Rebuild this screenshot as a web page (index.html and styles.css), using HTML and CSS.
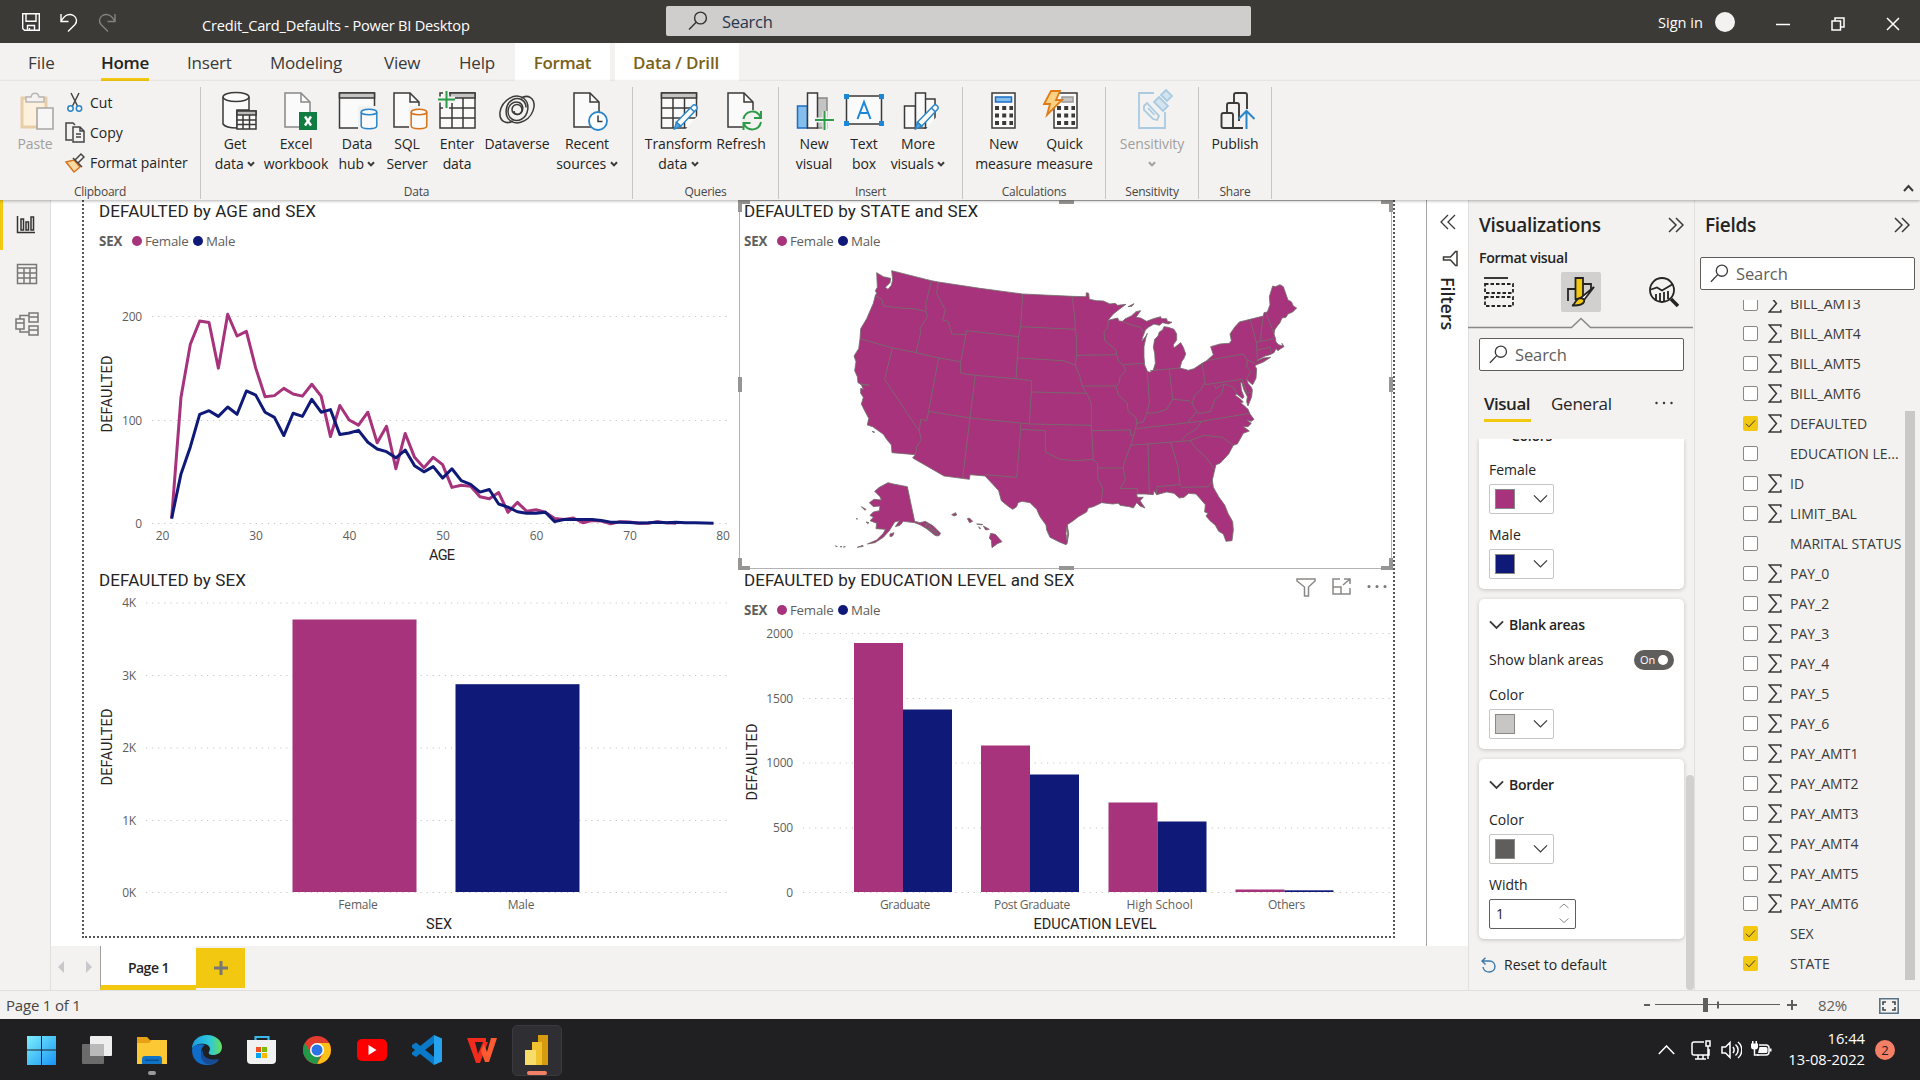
FILE: index.html
```html
<!DOCTYPE html>
<html lang="en">
<head>
<meta charset="utf-8">
<title>Credit_Card_Defaults - Power BI Desktop</title>
<link rel="stylesheet" href="styles.css">
</head>
<body>
<svg class="defs" aria-hidden="true">
  <symbol id="i-search" viewBox="0 0 20 20"><circle cx="12.5" cy="7" r="5.9"/><path d="M8.2 11.2L1 18.6"/></symbol>
  <symbol id="i-caret" viewBox="0 0 8 6"><path d="M1 1.2L4 4.4L7 1.2"/></symbol>
  <symbol id="i-chev" viewBox="0 0 16 10"><path d="M1 1.2L8 8.2L15 1.2"/></symbol>
  <symbol id="i-dbl" viewBox="0 0 16 16"><path d="M1 1l7 7l-7 7M8 1l7 7l-7 7"/></symbol>
  <symbol id="i-sigma" viewBox="0 0 14 19"><path d="M12.8 3.2V1H1.2L8.4 9.5L1.2 18H12.8V15.8"/></symbol>
  <symbol id="i-check" viewBox="0 0 15 15"><path d="M3 7.8L6 10.8L12 4.4"/></symbol>
  <symbol id="i-doc" viewBox="0 0 28 36"><path class="paper" d="M1 1h16l9 9v25H1z"/><path d="M17 1v9h9"/></symbol>
  <symbol id="i-cyl" viewBox="0 0 18 22"><path class="paper" d="M1.2 4v14c0 3.6 15.6 3.6 15.6 0V4"/><ellipse class="paper" cx="9" cy="4" rx="7.8" ry="2.8"/></symbol>
  <symbol id="i-pencil" viewBox="0 0 26 28"><path class="paper" d="M3 20L20 2.6c2-2 6 1.6 4 4L7.5 24z"/><path class="nib" d="M3 20l4.500 4L1 27z"/><path d="M17.500 5.200l4.300 4"/></symbol>
</svg>

<header class="titlebar">
  <div class="quick">
    <svg width="18" height="18" viewBox="0 0 18 18"><path d="M.7.7h16.600v16.600H2.500L.7 15.500zM4 .7v7.500h10V.7M5.500 17v-4.500h7V17M7.500 15v2"/></svg>
    <svg width="18" height="20" viewBox="0 0 18 20"><path d="M1 1v7.500h7.500M1 8.500C5 1 10 .5 13.500 2.500c4 2.500 3.500 6.500 1.500 9L8 18.500"/></svg>
    <svg class="dim" width="18" height="20" viewBox="0 0 18 20"><path d="M17 1v7.500H9.500M17 8.500C13 1 8 .5 4.500 2.500c-4 2.500-3.500 6.500-1.500 9L10 18.500"/></svg>
  </div>
  <div class="doc-title">Credit_Card_Defaults - Power BI Desktop</div>
  <div class="top-search"><svg width="20" height="20"><use href="#i-search"/></svg><span>Search</span></div>
  <div class="signin"><span>Sign in</span><i></i></div>
  <div class="winbtns">
    <svg width="14" height="14" viewBox="0 0 14 14"><path d="M0 7.500h14"/></svg>
    <svg width="14" height="14" viewBox="0 0 14 14"><path d="M1 4h8.500v9H1zM4 4V1h9v9H9.500"/></svg>
    <svg width="14" height="14" viewBox="0 0 14 14"><path d="M1 1l12 12M13 1L1 13"/></svg>
  </div>
</header>

<nav class="tabs">
  <span class="t-file">File</span><span class="t-home">Home</span><span class="t-insert">Insert</span><span class="t-model">Modeling</span><span class="t-view">View</span><span class="t-help">Help</span><span class="ctx c1">Format</span><span class="ctx c2">Data / Drill</span>
</nav>

<section class="ribbon">
  <div class="group g-clip">
    <div class="items">
      <div class="item paste off">
        <svg class="ico" viewBox="0 0 38 40"><path fill="#fdf0dc" stroke="#e9cda6" stroke-width="3" d="M6 7h24v29H6z"/><path fill="#f3f2f1" stroke="#b9b7b5" stroke-width="1.500" d="M10 11V6h5c1-5 7-5 8 0h5v5z"/><path fill="#f6f6f6" stroke="#a9a7a5" stroke-width="1.600" d="M21 17h16v21H21z"/></svg>
        <b>Paste</b>
      </div>
      <div class="cliplist">
        <div><svg width="20" height="22" viewBox="0 0 20 22"><path d="M6 2l6.500 13M14 2L7.500 15" stroke="#444"/><circle cx="5.500" cy="17.500" r="2.700" stroke="#2a86c8"/><circle cx="14" cy="17.500" r="2.700" stroke="#2a86c8"/></svg>Cut</div>
        <div><svg width="20" height="22" viewBox="0 0 20 22"><path d="M7 18H1V1h7l2 2" stroke="#444"/><path d="M8 5h7l4 4v11H8zM15 5v4h4M11 12h5M11 15h5" stroke="#444"/></svg>Copy</div>
        <div><svg width="20" height="22" viewBox="0 0 20 22"><path d="M1 10l8-2 6 7-6 5z" fill="#fbd9a5" stroke="#d9731a"/><path d="M8 6l9 9M10 8l6-6 3 3-6 6" stroke="#444"/></svg>Format painter</div>
      </div>
    </div>
    <em>Clipboard</em>
  </div>
  <div class="group g-data">
    <div class="items">
      <div class="item w60"><svg class="ico" viewBox="0 0 38 40"><path class="paper" d="M7 6v27c2 3 8 4 14 4V19h12V6"/><ellipse class="paper" cx="20" cy="6" rx="13" ry="4.500"/><path class="paper" d="M21 20h19v18H21z"/><path fill="#bbb" d="M21 20h19v4H21z"/><path d="M21 29h19M21 33.500h19M27 24v14M33.500 24v14"/></svg><b>Get<br>data <svg class="car"><use href="#i-caret"/></svg></b></div>
      <div class="item w62"><svg class="ico" viewBox="0 0 38 40"><use class="gray" href="#i-doc" x="7" y="1" width="28" height="36"/><path fill="#107c41" stroke="none" d="M22 21h18v18H22z"/><path stroke="#fff" stroke-width="2.400" d="M28 25.500l6 9M34 25.500l-6 9"/></svg><b>Excel<br>workbook</b></div>
      <div class="item w60"><svg class="ico" viewBox="0 0 38 40"><path class="paper" d="M1.500 2h35v35h-35z"/><path fill="#c4c4c4" d="M1.500 2h35v5h-35z"/><path fill="#f3f2f1" stroke="none" d="M20 15h20v25H20z"/><use class="blue" href="#i-cyl" x="22" y="17" width="18" height="22"/></svg><b>Data<br>hub <svg class="car"><use href="#i-caret"/></svg></b></div>
      <div class="item w40"><svg class="ico" viewBox="0 0 38 40"><use href="#i-doc" x="5" y="1" width="28" height="36"/><path fill="#f3f2f1" stroke="none" d="M21 15h20v25H21z"/><use class="orange" href="#i-cyl" x="22" y="17" width="18" height="22"/></svg><b>SQL<br>Server</b></div>
      <div class="item w60"><svg class="ico" viewBox="0 0 38 40"><path class="paper" d="M2 2h35v35H2z"/><path fill="#c4c4c4" d="M12 2h25v5H12z"/><path d="M2 17h35M2 27h35M14 12v25M25 7v30"/><path stroke="#f3f2f1" stroke-width="6" d="M-1 8.500h18M8 0v18"/><path stroke="#2d9c4a" stroke-width="2" d="M0 8.500h17M8.500 0v17"/></svg><b>Enter<br>data</b></div>
      <div class="item w60"><svg class="ico" viewBox="0 0 38 40"><g stroke-width="1.500"><path d="M26 7.500C17 1 4 9 2 21c-1 9 6 13 13 9"/><path d="M12 29.500c9 6.500 22-1.500 24-13.500c1-9-6-13-13-9"/><path d="M26 7.500c6 5 5 17-3 21c-6 3-13-1-13-8c0-6 5-11 11-9c4 1.500 5 7 2 10.500c-2.500 2.500-7 1.500-7-2"/><path d="M12 29.500c-6-5-5-17 3-21c6-3 13 1 13 8"/><circle cx="19" cy="18.500" r="5"/></g></svg><b>Dataverse</b></div>
      <div class="item w80"><svg class="ico" viewBox="0 0 38 40"><use href="#i-doc" x="5" y="1" width="28" height="36"/><circle cx="30" cy="30" r="9" fill="#fff" stroke="#2a86c8" stroke-width="1.800"/><path d="M30 24.500v6h4.500"/></svg><b>Recent<br>sources <svg class="car"><use href="#i-caret"/></svg></b></div>
    </div>
    <em>Data</em>
  </div>
  <div class="group g-query">
    <div class="items">
      <div class="item w71"><svg class="ico" viewBox="0 0 38 40"><path class="paper" d="M1.500 2h35v35h-35z"/><path fill="#c4c4c4" d="M1.500 2h35v5h-35z"/><path d="M1.500 17h35M1.500 27h35M13 7v30M24.500 7v30"/><path fill="#f3f2f1" stroke="none" d="M24 40L38 24v16z"/><use class="blue" href="#i-pencil" x="13" y="12" width="26" height="27"/></svg><b>Transform<br>data <svg class="car"><use href="#i-caret"/></svg></b></div>
      <div class="item w54"><svg class="ico" viewBox="0 0 38 40"><use href="#i-doc" x="5" y="1" width="28" height="36"/><circle cx="30" cy="30" r="11" fill="#f3f2f1" stroke="none"/><path stroke="#2d9c4a" stroke-width="2" d="M21.500 28c2-9 13-10 17-2M39 20v7h-7M39 31c-2 9-13 10-17 2M21.500 39v-7h7"/></svg><b>Refresh</b></div>
    </div>
    <em>Queries</em>
  </div>
  <div class="group g-insert">
    <div class="items">
      <div class="item w50"><svg class="ico" viewBox="0 0 38 40"><path fill="#83beec" stroke="#1b6ec2" d="M2.500 15h10v22h-10z"/><path fill="#c4c4c4" stroke="#888" d="M22 7h10v30H22z"/><path class="paper" d="M12.500 2h10v35h-10z"/><path stroke="#f3f2f1" stroke-width="5" d="M20 29h18M30 20v18"/><path stroke="#2d9c4a" stroke-width="2" d="M20 29h19M29.500 20v19"/></svg><b>New<br>visual</b></div>
      <div class="item w50"><svg class="ico" viewBox="0 0 38 40"><path class="paper" d="M1.500 5h35v28h-35z"/><path fill="#1b87d6" stroke="none" d="M-1 3h5v5h-5zM34 3h5v5h-5zM-1 30h5v5h-5zM34 30h5v5h-5z"/><path stroke="#1b87d6" stroke-width="2" d="M12.500 28L19 11l6.500 17M15 22h8"/></svg><b>Text<br>box</b></div>
      <div class="item w58"><svg class="ico" viewBox="0 0 38 40"><path class="paper" d="M5.500 15h11v22h-11zM26 8h10v29H26z"/><path class="paper" d="M16.500 2h10v35h-10z"/><path fill="#f3f2f1" stroke="none" d="M27 38L39 24v15z"/><use class="blue" href="#i-pencil" x="15" y="12" width="26" height="27"/></svg><b>More<br>visuals <svg class="car"><use href="#i-caret"/></svg></b></div>
    </div>
    <em>Insert</em>
  </div>
  <div class="group g-calc">
    <div class="items">
      <div class="item w61"><svg class="ico" viewBox="0 0 38 40"><path class="paper" d="M7 2h23v35H7z"/><path fill="#83beec" stroke="#1b6ec2" d="M10.500 6h16v5h-16z"/><path stroke-width="4" stroke-dasharray="4 3.200" d="M10 17h18M10 24.500h18M10 32h18"/></svg><b>New<br>measure</b></div>
      <div class="item w61"><svg class="ico" viewBox="0 0 38 40"><path class="paper" d="M8 2h23v35H8z"/><path fill="#c4c4c4" stroke="#999" d="M16 6h11v5H16z"/><path stroke-width="4" stroke-dasharray="4 3.200" d="M11 17h18M11 24.500h18M11 32h18"/><path fill="#fcd182" stroke="#e07b1a" stroke-width="1.800" d="M5 0h9L10 9h6L1 24l3-11H-2z"/></svg><b>Quick<br>measure</b></div>
    </div>
    <em>Calculations</em>
  </div>
  <div class="group g-sens">
    <div class="items">
      <div class="item off w92"><svg class="ico" viewBox="0 0 38 40"><g stroke="#a9cbe2" stroke-width="1.800"><path d="M21 2H6v35h26V21"/><path d="M11 15l3-3 12 13-2 4-4-1-9-9z"/><path d="M15 17l6.500 7"/><path fill="#d3e4ef" d="M21 11l5-5 9 9-5 5zM28 4l5-5 6 6-5 5z"/></g></svg><b>Sensitivity<br><svg class="car"><use href="#i-caret"/></svg></b></div>
    </div>
    <em>Sensitivity</em>
  </div>
  <div class="group g-share">
    <div class="items">
      <div class="item w73"><svg class="ico" viewBox="0 0 38 40"><g stroke-width="1.900"><path d="M18 12V4q0-2 2-2h9q2 0 2 2v14M11 22V14q0-2 2-2h8q2 0 2 2v16"/><path d="M5.500 36V24q0-2 2-2H15q2 0 2 2v13H7.500q-2 0-2-2zM17 37h10"/></g><path stroke="#2a86c8" stroke-width="2" d="M30.500 38V21M22.500 28l8-8 8 8"/></svg><b>Publish</b></div>
    </div>
    <em>Share</em>
  </div>
  <svg class="collapse" width="11" height="9" viewBox="0 0 11 9"><path d="M1 7l4.500-5L10 7"/></svg>
</section>

<main class="workspace">
  <aside class="rail">
    <div class="on"><svg width="20" height="20" viewBox="0 0 20 20"><path d="M1.500 1v16.500H19M5 4h2.500v11H5zM10 7h2.500v8H10zM15 2h2.500v13H15z"/></svg></div>
    <div><svg width="22" height="22" viewBox="0 0 22 22"><path d="M1.500 1.500h19v19h-19zM1.500 5h19M1.500 10h19M1.500 15h19M8 5v15.500M14 5v15.500"/></svg></div>
    <div><svg width="24" height="24" viewBox="0 0 24 24"><path d="M1 7h8v10H1zM1 11h8M14 1h9v9h-9zM14 5h9M14 14h9v9h-9zM14 18h9M5 7V3.500h9M5 17v3h9"/></svg></div>
  </aside>

  <div class="center">
    <div class="stage">
      <div class="canvas">
        <div class="report">
          <article class="visual">
            <h3>DEFAULTED by AGE and SEX</h3>
            <div class="legend"><b>SEX</b><i class="f"></i><span>Female</span><i class="m"></i><span>Male</span></div>
            <svg class="chart" viewBox="84 256 655 311">
              <g class="grid"><path d="M152 316.500H731M152 420.500H731M152 523.500H731"/></g>
              <g class="ax end"><text x="142" y="320.500">200</text><text x="142" y="424.500">100</text><text x="142" y="528">0</text></g>
              <g class="ax mid"><text x="162.500" y="540">20</text><text x="256" y="540">30</text><text x="349.500" y="540">40</text><text x="443" y="540">50</text><text x="536.500" y="540">60</text><text x="630" y="540">70</text><text x="723" y="540">80</text></g>
              <text class="at mid" x="442" y="560" textLength="26">AGE</text>
              <text class="at mid" transform="translate(112 394) rotate(-90)" textLength="77">DEFAULTED</text>
              <g transform="translate(-24.560 523.700) scale(9.343 -1.037)" class="series">
                <polyline class="sf" points="21,5 22,122 23,173 24,195.500 25,194 26,150 27,202 28,181 29,185.500 30,150 31,122.500 32,123.500 33,130.500 34,125 35,123 36,134.500 37,123 38,84 39,114 40,100 41,95 42,107.500 43,78 44,94 45,53 46,87 47,64 48,54 49,64 50,57 51,35 52,37 53,36 54,26 55,24 56,30 57,11 58,20.500 59,12 60,13.500 61,11 62,5 63,4 64,5.500 65,1 66,3 67,2.500 68,0 69,2 70,1.600 71,.5 72,.5 73,2 74,.8 75,.5"/>
                <polyline class="sm" points="21,5 22,48 23,74 24,105.500 25,109 26,103.500 27,112.500 28,105.500 29,128 30,124 31,107.500 32,102.500 33,85 34,106.500 35,103.500 36,120 37,107.500 38,110 39,86 40,87.500 41,90 42,78.500 43,72 44,69.500 45,63.500 46,71 47,56 48,50 49,55 50,44 51,53 52,41.500 53,38 54,30.500 55,33 56,19 57,16 58,11.500 59,10 60,10 61,11 62,2 63,4 64,4 65,4 66,4 67,3 68,1.500 69,1.500 70,1.200 71,.7 72,1 73,1.500 74,1 75,1.300 76,1 77,.8 78,.7 79,.5"/>
              </g>
            </svg>
          </article>

          <article class="visual selected">
            <h3>DEFAULTED by STATE and SEX</h3>
            <div class="legend"><b>SEX</b><i class="f"></i><span>Female</span><i class="m"></i><span>Male</span></div>
            <svg class="chart" viewBox="739 256 655 311">
              <g transform="translate(820 250) scale(.33333)" class="map">
                <path class="land" d="M170,68 L190,80 212,85 210,98 196,112 204,118 214,106 218,90 215,62 334,92 355,96 480,115 608,132 757,139 798,140 799,128 806,130 808,148 830,152 850,153 870,162 885,160 893,166 918,163 900,176 880,192 864,211 893,204 897,213 908,214 915,207 935,197 948,185 962,182 955,192 948,202 962,204 980,214 1000,206 1022,200 1024,206 1040,206 1042,214 1056,217 1045,222 1028,218 1018,226 1002,222 985,232 976,240 968,262 965,274 978,258 982,250 978,262 972,290 972,320 974,345 982,364 990,367 1000,360 1006,340 1004,310 1000,292 1004,268 1014,258 1018,246 1028,240 1032,230 1045,232 1062,238 1070,252 1070,270 1060,284 1062,294 1072,286 1082,278 1090,292 1097,312 1092,325 1085,335 1080,354 1105,361 1122,356 1146,340 1160,332 1180,314 1172,290 1200,282 1228,280 1234,272 1230,252 1245,230 1258,216 1290,208 1330,198 1332,188 1342,186 1350,164 1348,140 1358,108 1366,110 1380,104 1390,110 1404,150 1414,155 1420,168 1430,174 1418,186 1404,192 1398,202 1386,204 1380,218 1372,228 1364,240 1362,252 1366,264 1368,276 1376,284 1388,288 1386,280 1392,290 1382,296 1374,302 1368,296 1362,308 1350,314 1335,318 1320,326 1310,334 1330,324 1352,322 1330,336 1306,346 1306,350 1310,356 1308,385 1298,404 1290,398 1280,388 1284,400 1294,412 1297,420 1295,440 1284,468 1280,455 1282,440 1272,420 1266,400 1262,396 1264,420 1272,440 1268,446 1250,432 1246,436 1262,448 1270,456 1262,458 1278,472 1284,478 1290,492 1302,508 1294,514 1280,510 1294,520 1284,530 1270,530 1288,543 1270,550 1252,582 1240,586 1226,612 1200,640 1188,644 1184,660 1177,690 1180,712 1196,740 1214,765 1224,790 1238,815 1240,840 1236,872 1218,874 1210,852 1196,844 1186,826 1170,812 1158,798 1164,790 1154,786 1156,764 1142,748 1128,732 1106,730 1092,742 1078,744 1062,730 1040,726 1010,734 1002,722 1000,734 975,732 950,732 952,742 970,742 960,752 975,774 960,768 950,758 940,774 928,770 900,766 895,760 878,762 845,758 820,770 805,774 800,786 775,800 760,812 742,824 738,850 742,880 738,884 718,876 690,862 680,840 678,825 660,800 650,778 630,758 606,754 594,758 590,770 578,778 566,770 544,752 536,722 510,694 495,678 450,674 448,688 372,678 278,624 286,614 216,608 214,585 200,568 190,553 172,540 158,530 142,525 146,505 136,486 124,462 130,442 122,430 122,415 130,418 124,404 114,398 112,380 104,362 108,335 102,318 116,296 120,266 122,236 140,206 160,160 166,136 170,130 166,122 172,112Z"/>
                <path class="land" d="M204,698 L220,702 262,710 284,814 300,818 316,814 340,828 362,850 356,858 345,856 320,836 300,824 284,818 250,814 240,826 226,830 238,812 224,816 208,842 190,862 165,878 142,882 170,870 190,850 196,838 168,836 170,820 150,812 160,802 150,796 160,786 178,782 180,768 160,770 148,758 162,748 184,750 180,740 164,724 178,712Z"/>
                <path class="land" d="M112,892l16-6 2 3zM60,890l6 0zM70,891l6-1zM46,888l6 2zM108,806l5 1zM124,770l14 8-3 3zM210,852l12 -4-4 10-8 2zM138,816l9 2-4 3zM924,170l18-9-6 8zM395,794l12-6 3 7-8 3zM442,806l6-2 10 10-9 4zM470,822l18 1-2 2zM476,830l6 5-3 1zM490,828l18 10-11 2zM512,850l14 3 20 22-14 6-16 12-2-22-6-6zM156,544l8 2-2 2zM122,402l26 4zM742,826l4 26-4 24 1-26z"/>
                <path class="knot" d="M310,818l44 36M318,818l40 36M314,826l36 32M322,820l-6 12M330,826l-6 14M340,832l-8 14M350,840l-8 14"/>
                <path class="borders" d="M334,92L318,160 318,182M355,96L350,130 376,180M166,136L186,148 190,168 240,174 280,176 318,184 322,200 300,236 302,250 288,308M120,266L217,294 288,308 356,324 422,335M217,294L194,388 298,544 302,508 320,512 326,484M298,544L304,570 290,590 286,614M356,324L326,484 450,504 630,522 814,526M422,335L422,370 466,376 450,504 428,684M422,335L440,242 596,260 588,386M466,376L588,386 634,392 634,426 628,520M376,180L368,210 384,214 396,252 438,254M608,132L602,230 596,260M602,230L766,238M757,139L764,200 766,238 770,265 770,316 766,346 780,380 786,408 800,430 814,460 814,526 820,632M592,324L730,332 766,346M634,426L800,430M770,316L890,314 888,300 854,272 852,244 864,232 864,211M786,408L888,408M890,314L896,334 908,344 918,362 900,380 898,398 888,410 896,436 922,460 924,484 948,502 950,520 946,540 932,586 912,640 910,654 916,690 900,716 952,716 954,732M908,344L972,340M908,214L930,224 962,232 970,246M982,364L988,460 980,490 970,516 950,520M980,490L1010,488 1040,478 1058,448 1048,358M990,362L1080,354M1058,448L1080,450 1108,452 1116,460 1124,436 1142,420 1152,400 1156,404 1146,340M1156,404L1266,388 1282,430 1297,425M1160,332L1270,312 1282,330 1280,350 1292,366 1280,386M1282,330L1306,340M1290,208L1302,250 1310,280 1312,335M1330,198L1324,240 1322,272M1338,190L1362,250M1310,276L1362,266M1312,300L1350,292 1354,310M1184,404L1188,416 1212,402 1240,412 1250,430M1212,402L1206,430 1184,450 1172,484 1140,490 1130,486 1116,460M1130,486L1104,516M950,536L1104,518 1144,514 1290,490M932,586L1080,574 1110,572 1130,596 1160,624 1184,660M1144,514L1130,536 1104,552 1084,570M816,542L932,540 930,556 942,556M602,522L602,538 676,542 676,606 720,628 770,632 820,628 832,640 834,686 848,716 844,758M602,538L590,682 495,674M834,654L910,654M984,582L988,732M1052,576L1074,650 1080,704 1010,710 1010,734M1080,704L1086,712 1166,710 1172,698 1177,700M1110,572L1150,556 1208,562 1240,586"/>
              </g>
            </svg>
            <i class="h tl"></i><i class="h tc"></i><i class="h tr"></i><i class="h ml"></i><i class="h mr"></i><i class="h bl"></i><i class="h bc"></i><i class="h br"></i>
          </article>

          <article class="visual">
            <h3>DEFAULTED by SEX</h3>
            <svg class="chart" viewBox="84 592 655 345">
              <g class="grid"><path d="M146 603H731M146 675.500H731M146 748H731M146 820.500H731M146 892.500H731"/></g>
              <g class="ax end"><text x="136" y="607">4K</text><text x="136" y="679.500">3K</text><text x="136" y="752">2K</text><text x="136" y="824.500">1K</text><text x="136" y="897">0K</text></g>
              <rect class="bf" x="292.500" y="619.500" width="124" height="272.500"/><rect class="bm" x="455.500" y="684.200" width="124" height="207.800"/>
              <g class="ax mid"><text x="358" y="909">Female</text><text x="521" y="909">Male</text></g>
              <text class="at mid" x="439" y="929" textLength="26">SEX</text>
              <text class="at mid" transform="translate(112 747) rotate(-90)" textLength="77">DEFAULTED</text>
            </svg>
          </article>

          <article class="visual">
            <h3>DEFAULTED by EDUCATION LEVEL and SEX</h3>
            <div class="legend"><b>SEX</b><i class="f"></i><span>Female</span><i class="m"></i><span>Male</span></div>
            <svg class="chart" viewBox="739 625 655 312">
              <g class="grid"><path d="M803 633.500H1391M803 698.500H1391M803 763H1391M803 828H1391M803 892.500H1391"/></g>
              <g class="ax end"><text x="793" y="637.500">2000</text><text x="793" y="702.500">1500</text><text x="793" y="767">1000</text><text x="793" y="832">500</text><text x="793" y="897">0</text></g>
              <g class="bf"><rect x="854" y="643" width="49" height="249"/><rect x="981" y="745.500" width="49" height="146.500"/><rect x="1108.500" y="802.500" width="49" height="89.500"/><rect x="1235.500" y="889.500" width="49" height="2.500"/></g>
              <g class="bm"><rect x="903" y="709.500" width="49" height="182.500"/><rect x="1030" y="774.500" width="49" height="117.500"/><rect x="1157.500" y="821.500" width="49" height="70.500"/><rect x="1284.500" y="890.300" width="49" height="1.700"/></g>
              <g class="ax mid"><text x="905" y="909" textLength="50">Graduate</text><text x="1032" y="909" textLength="76">Post Graduate</text><text x="1159.500" y="909" textLength="66">High School</text><text x="1286.500" y="909" textLength="37">Others</text></g>
              <text class="at mid" x="1095" y="929" textLength="123">EDUCATION LEVEL</text>
              <text class="at mid" transform="translate(757 762) rotate(-90)" textLength="77">DEFAULTED</text>
            </svg>
            <div class="vtools">
              <svg width="20" height="19" viewBox="0 0 20 19"><path d="M1 1h18v2l-6.500 6v9h-4V9L1 3z"/></svg>
              <svg width="19" height="17" viewBox="0 0 19 17"><path d="M8 1H1v15h17V10M12 1h6v5M18 1l-7 6M1 9h8v7"/></svg>
              <svg width="20" height="17" viewBox="0 0 20 17"><g class="dots"><circle cx="2" cy="8.500" r="1.500"/><circle cx="10" cy="8.500" r="1.500"/><circle cx="18" cy="8.500" r="1.500"/></g></svg>
            </div>
          </article>
        </div>
      </div>
      <aside class="filters">
        <svg class="back" width="16" height="16"><use href="#i-dbl"/></svg>
        <svg width="16" height="17" viewBox="0 0 16 17"><path d="M15 1.500v14h-1.500L8.500 10H1.500V7h7l5-5.500z"/></svg>
        <span>Filters</span>
      </aside>
    </div>
    <footer class="pages">
      <svg width="6" height="12" viewBox="0 0 6 12"><path d="M6 0v12L0 6z"/></svg>
      <svg width="6" height="12" viewBox="0 0 6 12"><path d="M0 0v12l6-6z"/></svg>
      <div class="page">Page 1</div>
      <div class="add"><svg width="14" height="14" viewBox="0 0 14 14"><path d="M5.500 0h3v5.500H14v3H8.500V14h-3V8.500H0v-3h5.500z"/></svg></div>
    </footer>
  </div>

  <aside class="viz">
    <div class="phead"><h2>Visualizations</h2><svg width="16" height="16"><use href="#i-dbl"/></svg></div>
    <div class="sub">Format visual</div>
    <div class="modes">
      <svg width="30" height="30" viewBox="0 0 30 30"><path d="M0 1h24"/><path stroke-dasharray="3.500 2" d="M1 7h28v9H1zM1 20h28v9H1z"/></svg>
      <div class="mode-on"><svg width="28" height="30" viewBox="0 0 28 30"><path d="M1 24V12h7M15 7h9v5"/><path fill="#f2c811" d="M8.500 1H16v21H8.500z"/><path fill="#fff" d="M27 10L17 23l-3-2.500z"/><path fill="#f2c811" d="M13 21c3 0 5 2 4 4c-2 4-8 3.500-12 3.500c4-1 3-7 8-7.500z"/></svg></div>
      <svg width="30" height="30" viewBox="0 0 30 30"><circle cx="13" cy="13" r="12"/><path d="M2 12.500l6-2 5 3 11-6.500M7 23v-6M11 24v-8M15 24V15M19 22v-8"/><path stroke-width="3.500" d="M22 22l7 7"/></svg>
    </div>
    <svg class="notch" width="225" height="12" viewBox="0 0 225 12"><path d="M0 10.500H103.500L113 1.500L122.500 10.500H225"/></svg>
    <div class="search"><svg width="19" height="19"><use href="#i-search"/></svg>Search</div>
    <div class="vtabs"><b>Visual</b><span>General</span><svg width="18" height="4" viewBox="0 0 18 4"><circle cx="1.500" cy="2" r="1.200"/><circle cx="9" cy="2" r="1.200"/><circle cx="16.500" cy="2" r="1.200"/></svg></div>
    <div class="cards">
      <section class="card first">
        <div class="cut">Colors</div>
        <label>Female</label><div class="pick"><i class="cf"></i><svg width="16" height="10"><use href="#i-chev"/></svg></div>
        <label class="next">Male</label><div class="pick"><i class="cm"></i><svg width="16" height="10"><use href="#i-chev"/></svg></div>
      </section>
      <section class="card">
        <h4><svg width="16" height="10"><use href="#i-chev"/></svg>Blank areas</h4>
        <div class="line"><label>Show blank areas</label><span class="toggle">On<i></i></span></div>
        <label class="gap">Color</label><div class="pick"><i class="cg"></i><svg width="16" height="10"><use href="#i-chev"/></svg></div>
      </section>
      <section class="card">
        <h4><svg width="16" height="10"><use href="#i-chev"/></svg>Border</h4>
        <label class="gap">Color</label><div class="pick"><i class="cd"></i><svg width="16" height="10"><use href="#i-chev"/></svg></div>
        <label class="next">Width</label><div class="num">1<svg width="10" height="20" viewBox="0 0 10 20"><path d="M.5 5L5 1l4.500 4M.5 15.500l4.500 4 4.500-4"/></svg></div>
      </section>
      <div class="reset"><svg width="15" height="16" viewBox="0 0 15 16"><path d="M1 4h7.500c7 0 7.500 10.500 0 11c-4 0-6-2-6.500-5M4.500.8L1 4l3.500 3.500"/></svg>Reset to default</div>
    </div>
    <i class="thumb"></i>
  </aside>

  <aside class="fields">
    <div class="phead"><h2>Fields</h2><svg width="16" height="16"><use href="#i-dbl"/></svg></div>
    <div class="search"><svg width="19" height="19"><use href="#i-search"/></svg>Search</div>
    <ul>
      <li><i></i><svg><use href="#i-sigma"/></svg>BILL_AMT3</li>
      <li><i></i><svg><use href="#i-sigma"/></svg>BILL_AMT4</li>
      <li><i></i><svg><use href="#i-sigma"/></svg>BILL_AMT5</li>
      <li><i></i><svg><use href="#i-sigma"/></svg>BILL_AMT6</li>
      <li><i class="ck"><svg><use href="#i-check"/></svg></i><svg><use href="#i-sigma"/></svg>DEFAULTED</li>
      <li><i></i><svg></svg>EDUCATION LE...</li>
      <li><i></i><svg><use href="#i-sigma"/></svg>ID</li>
      <li><i></i><svg><use href="#i-sigma"/></svg>LIMIT_BAL</li>
      <li><i></i><svg></svg>MARITAL STATUS</li>
      <li><i></i><svg><use href="#i-sigma"/></svg>PAY_0</li>
      <li><i></i><svg><use href="#i-sigma"/></svg>PAY_2</li>
      <li><i></i><svg><use href="#i-sigma"/></svg>PAY_3</li>
      <li><i></i><svg><use href="#i-sigma"/></svg>PAY_4</li>
      <li><i></i><svg><use href="#i-sigma"/></svg>PAY_5</li>
      <li><i></i><svg><use href="#i-sigma"/></svg>PAY_6</li>
      <li><i></i><svg><use href="#i-sigma"/></svg>PAY_AMT1</li>
      <li><i></i><svg><use href="#i-sigma"/></svg>PAY_AMT2</li>
      <li><i></i><svg><use href="#i-sigma"/></svg>PAY_AMT3</li>
      <li><i></i><svg><use href="#i-sigma"/></svg>PAY_AMT4</li>
      <li><i></i><svg><use href="#i-sigma"/></svg>PAY_AMT5</li>
      <li><i></i><svg><use href="#i-sigma"/></svg>PAY_AMT6</li>
      <li><i class="ck"><svg><use href="#i-check"/></svg></i><svg></svg>SEX</li>
      <li><i class="ck"><svg><use href="#i-check"/></svg></i><svg></svg>STATE</li>
    </ul>
    <i class="thumb"></i>
  </aside>
</main>

<footer class="status">
  <span>Page 1 of 1</span>
  <svg class="zoom" width="156" height="18" viewBox="0 0 156 18"><path stroke-width="2" d="M1 9h6M144 9h10M149 4v10"/><path stroke-width="1" d="M12 8.500h125"/><path stroke-width="5" d="M62.500 2v14"/><path stroke-width="2" d="M75 5.500v7"/></svg>
  <span class="pct">82%</span>
  <svg class="fit" width="20" height="16" viewBox="0 0 20 16"><path stroke="#5a7288" d="M.8.800h18.400v14.400H.8z"/><path d="M7 4H4v3M13 4h3v3M4 9v3h3M16 9v3h-3"/></svg>
</footer>

<footer class="taskbar">
  <div class="apps">
    <div><svg width="30" height="30" viewBox="0 0 30 30"><defs><linearGradient id="gw" x1="0" y1="0" x2="1" y2="1"><stop offset="0" stop-color="#7cf0fb"/><stop offset="1" stop-color="#1893f5"/></linearGradient></defs><path fill="url(#gw)" d="M0 1h14v13.500H0zM15 1h14v13.500H15zM0 15.500h14V30H0zM15 15.500h14V30H15z"/></svg></div>
    <div><svg width="30" height="30" viewBox="0 0 30 30"><rect x="8" y="1" width="22" height="20" rx="1" fill="#eee"/><rect x="0" y="9" width="22" height="20" rx="1" fill="#6b6b6b"/><path fill="#b9b9b9" d="M8 9h14v12H8z"/></svg></div>
    <div><svg width="30" height="30" viewBox="0 0 30 30"><path fill="#e6a117" d="M0 2h10l3 3h17v5H0z"/><path fill="#fcc934" d="M0 8h12l3-3h15v24H0z"/><path fill="#1073c6" d="M5 29v-5q0-3 3-3h14q3 0 3 3v5z"/><path fill="#0a4f92" d="M8 24.500h14v1.500H8z"/></svg><u class="gray"></u></div>
    <div><svg width="30" height="30" viewBox="0 0 30 30"><defs><linearGradient id="ge" x1="0" y1="0" x2="1" y2="0"><stop offset="0" stop-color="#1b9de2"/><stop offset=".6" stop-color="#2fc8d8"/><stop offset="1" stop-color="#67df58"/></linearGradient></defs><path fill="url(#ge)" d="M0 14C0 5 7 0 15 0c9 0 15 6 15 12c0 6-5 8-9 8c-3 0-5-1-4-3c2-3 1-7-4-8C7 8 2 10 0 14z"/><path fill="#0f6cc9" d="M0 15C1 10 7 8 13 10c-6 3-5 14 3 17c4 2 8 0 11-2c-3 4-8 5-12 5C6 30 0 24 0 15z"/><path fill="#174b94" d="M11 15c-1 6 4 11 16 9c-4 6-9 6-12 5c-6-2-8-10-4-14z"/></svg></div>
    <div><svg width="30" height="30" viewBox="0 0 30 30"><path fill="none" stroke="#3bb8ea" stroke-width="2.200" d="M8.500 7V2h13v5"/><path fill="#f1f1f1" d="M0 5h29v20q0 4-4 4H4q-4 0-4-4z"/><path fill="#f25022" d="M9 12h5v5H9z"/><path fill="#7fba00" d="M15 12h5v5h-5z"/><path fill="#00a4ef" d="M9 18h5v5H9z"/><path fill="#ffb900" d="M15 18h5v5h-5z"/></svg></div>
    <div><svg width="28" height="28" viewBox="0 0 28 28"><circle cx="14" cy="14" r="14" fill="#e33b2e"/><path fill="#fbc116" d="M14 7h12.100A14 14 0 0 1 14 28L20 17.500z"/><path fill="#22994a" d="M1.900 7L8 17.500 17 20l-3 8A14 14 0 0 1 1.900 7z"/><circle cx="14" cy="14" r="7" fill="#fff"/><circle cx="14" cy="14" r="5.500" fill="#2a74e8"/></svg></div>
    <div><svg width="30" height="22" viewBox="0 0 30 22"><rect width="30" height="22" rx="5" fill="#f00"/><path fill="#fff" d="M11.500 6v10l8-5z"/></svg></div>
    <div><svg width="30" height="30" viewBox="0 0 30 30"><path fill="#0a79c8" d="M22 0v8L4 22 0 19.500v-2zM0 10l4-2.500L22 22v8L0 12.500z"/><path fill="#26a3ef" d="M22 0l8 3.500v23L22 30z"/></svg></div>
    <div><svg width="30" height="26" viewBox="0 0 30 26"><path fill="#f22b1c" d="M0 1h19v4H8l3 12L16 5h5l-8 21H9z"/><path fill="#ff5a30" d="M24 1h6l-8 24h-4l-4-11 3-7 3 8z"/></svg></div>
    <div class="active"><svg width="24" height="30" viewBox="0 0 24 30"><path fill="#d79b10" d="M13 0h10v30H13z"/><path fill="#f0c22e" d="M7 7h10v23H7z"/><path fill="#f8dc6a" d="M0 15h11v15H0z"/></svg><u></u></div>
  </div>
  <div class="tray">
    <svg width="17" height="10" viewBox="0 0 17 10"><path d="M.8 9l7.700-8 7.700 8"/></svg>
    <svg width="21" height="20" viewBox="0 0 21 20"><path d="M13 2H3Q1 2 1 4v9q0 2 2 2h15V9M4 19h11M7 15v4M12 15v4M15 1h4v5h-4zM17 6v13"/></svg>
    <svg width="21" height="20" viewBox="0 0 21 20"><path d="M1 7h3.500L9 2.500v15L4.500 13H1zM12 7c1.500 2 1.500 4 0 6M14.500 4.500c3.500 3 3.500 8 0 11M17 2c5 4 5 12 0 16"/></svg>
    <svg width="21" height="18" viewBox="0 0 21 18"><path d="M8 4h7q3 0 3 3v4q0 3-3 3H6"/><path fill="#fff" stroke="none" d="M8.500 6H15q1.500 0 1.500 1.500v3Q16.500 12 15 12H7zM18.500 7.500h2v3h-2zM0 2.500h7V6q0 2.500-3.500 2.500T0 6zM1 0h1.500v3H1zM4.500 0H6v3H4.500z"/><path d="M3.500 8v6h4"/></svg>
    <div class="clock">16:44<br>13-08-2022</div>
    <div class="badge">2</div>
  </div>
</footer>
</body>
</html>
```

FILE: styles.css
```css
* { box-sizing: border-box; }
body { margin: 0; width: 1920px; height: 1080px; overflow: hidden; display: flex; flex-direction: column; font-family: "Open Sans", "Noto Sans", sans-serif; font-size: 14px; color: #252423; background: #f3f2f1; }
svg { display: block; fill: none; stroke: #3b3a39; flex: none; }
h2, h3, h4, ul { margin: 0; padding: 0; font-weight: 600; }
i, em { font-style: normal; }
.defs { display: none; }
span, b { white-space: nowrap; }

/* title bar */
.titlebar { height: 43px; flex: none; background: #3b3a37; color: #fff; display: flex; align-items: center; }
.quick { display: flex; align-items: flex-start; gap: 20px; padding: 3px 0 0 22px; width: 202px; }
.quick svg { stroke: #fff; stroke-width: 1.400; }
.quick .dim { stroke: #85837f; }
.doc-title { width: 464px; font-size: 14.600px; letter-spacing: -.2px; line-height: 20px; padding-top: 6px; }
.top-search { width: 585px; height: 30px; margin-top: -1px; border-radius: 2px; background: #cfcecd; display: flex; align-items: center; gap: 14px; padding-left: 22px; color: #26374f; font-size: 16.500px; }
.top-search svg { stroke-width: 1.400; stroke: #333; }
.top-search span { letter-spacing: -.3px; }
.signin { display: flex; align-items: center; margin-left: 407px; gap: 12px; width: 118px; font-size: 14.600px; letter-spacing: 0; }
.signin i { width: 20px; height: 20px; border-radius: 50%; background: #f3f2f1; }
.winbtns { display: flex; gap: 41px; padding-top: 4px; }
.winbtns svg { stroke: #fff; stroke-width: 1.500; }

/* ribbon tabs */
.tabs { height: 38px; flex: none; position: relative; display: flex; font-size: 17px; line-height: 38px; padding-left: 28px; color: #3b3a39; letter-spacing: -.2px; }
.tabs span { padding-top: 1px; height: 38px; }
.t-file { width: 73px; letter-spacing: 0; }
.t-home { width: 48px; margin-right: 38px; font-weight: 600; color: #252423; border-bottom: 3px solid #f2c811; letter-spacing: -.3px; }
.t-insert { width: 83px; }
.t-model { width: 114px; }
.t-view { width: 75px; }
.t-help { width: 56px; }
.tabs .ctx { background: #fff; color: #7a6117; font-weight: 600; text-align: center; letter-spacing: -.35px; }
.c1 { width: 95px; margin-right: 5px; }
.tabs .c2 { width: 124px; padding-right: 2px; letter-spacing: -.2px; }

/* ribbon */
.ribbon { height: 119px; flex: none; display: flex; position: relative; z-index: 2; background: #f3f2f1; box-shadow: 0 1px 3px rgba(0,0,0,.3); }
.group { display: flex; flex-direction: column; justify-content: space-between; position: relative; border-right: 1px solid transparent; border-image: linear-gradient(transparent 7px, #c8c6c4 7px, #c8c6c4 117px, transparent 117px) 1; }
.g-clip { width: 201px; } .g-data { width: 432px; } .g-query { width: 146px; } .g-insert { width: 184px; }
.g-calc { width: 143px; } .g-sens { width: 93px; } .g-share { width: 73px; }
.group em { text-align: center; font-size: 12px; line-height: 16px; color: #484644; letter-spacing: -.25px; }
.items { display: flex; padding-top: 10px; }
.g-data .items { padding-left: 4px; } .g-query .items { padding-left: 10px; } .g-insert .items { padding-left: 10px; } .g-calc .items { padding-left: 10px; }
.item { display: flex; flex-direction: column; align-items: center; }
.item b { font-weight: 400; line-height: 20px; text-align: center; margin-top: 3px; letter-spacing: -.1px; }
.ico { width: 38px; height: 40px; overflow: visible; stroke-width: 1.500; }
.ico .paper, .paper { fill: #fafafa; }
.ico .gray { stroke: #888; }
.blue { stroke: #2a86c8; }
.nib { fill: #5ba8e0; }
.orange { stroke: #d9731a; }
.car { display: inline-block; width: 8px; height: 6px; margin-bottom: 2px; stroke-width: 2; }
.off { color: #a19f9d; } .off .car { stroke: #a19f9d; }
.w40 { width: 40px; } .w50 { width: 50px; } .w54 { width: 54px; } .w58 { width: 58px; } .w60 { width: 60px; } .w61 { width: 61px; } .w62 { width: 62px; } .w71 { width: 71px; } .w73 { width: 73px; } .w80 { width: 80px; } .w92 { width: 92px; }
.w60, .w71 { letter-spacing: -.1px; }
.paste { width: 65px; padding-left: 5px; }
.cliplist { display: grid; grid-template-rows: 30px 31px 29px; align-items: center; margin-top: -4px; }
.cliplist div { display: flex; align-items: center; gap: 5px; white-space: nowrap; letter-spacing: 0; }
.cliplist svg { stroke-width: 1.500; }
.collapse { margin: 103px 0 0 auto; margin-right: 6px; stroke-width: 2; }

/* workspace */
.workspace { height: 791px; flex: none; display: flex; border-bottom: 1px solid #e1dfdd; }
.rail { width: 51px; border-right: 1px solid #e1dfdd; }
.rail div { height: 50px; display: flex; align-items: center; justify-content: center; padding: 0 0 3px 3px; }
.rail svg { stroke: #777; stroke-width: 1.500; }
.rail .on { border-left: 3px solid #f2c811; padding: 0 2px 1px 0; }
.rail .on svg { stroke: #333; }
.center { width: 1417px; display: flex; flex-direction: column; }
.stage { height: 746px; display: flex; background: #fff; }
.canvas { width: 1376px; padding-left: 31px; border-right: 1px solid #a6a6a6; }
.report { width: 1313px; height: 738px; border: 2px dotted #555; border-top: 0; display: grid; grid-template-columns: 655px 654px; grid-template-rows: 366px 370px; padding-top: 1px; }
.visual { position: relative; display: flex; flex-direction: column; padding-left: 15px; }
.visual:nth-child(even) { padding-left: 5px; }
.visual h3 { font: 400 17px/20px "Roboto", sans-serif; letter-spacing: .13px; white-space: nowrap; color: #252423; }
.visual:nth-child(n+3) h3 { padding-top: 3px; }
.legend { display: flex; align-items: center; font-size: 13.300px; line-height: 18px; color: #605e5c; margin-top: 11px; letter-spacing: -.25px; }
.legend b { font-weight: 700; width: 33px; letter-spacing: -.1px; }
.legend i { width: 10px; height: 10px; border-radius: 50%; margin-right: 3px; }
.legend span { width: 48px; }
.f { background: #a6337b; } .m { background: #0f1a78; }
.chart { position: absolute; left: 0; bottom: 0; width: 655px; }
.grid path { stroke: #c8c6c4; stroke-dasharray: 1.200 4.900; }
.chart text { stroke: none; fill: #605e5c; font-size: 12px; letter-spacing: -.2px; }
.chart .at { font: 400 14.500px "Roboto", sans-serif; fill: #252423; letter-spacing: 0; }
.mid, .mid text { text-anchor: middle; }
.end text { text-anchor: end; }
.series polyline { vector-effect: non-scaling-stroke; stroke-width: 3; stroke-linejoin: round; }
.series .sf { stroke: #a6337b; } .series .sm { stroke: #0f1a78; }
.bf { fill: #a6337b; stroke: none; } .bm { fill: #0f1a78; stroke: none; }
.map path { stroke: #73706e; stroke-width: 2.500; stroke-linejoin: round; }
.map .land { fill: #a6337b; }
.selected::after { content: ""; position: absolute; left: 0; right: 1px; top: -1px; bottom: -2px; border: 1px solid #b3b3b3; }
.h { position: absolute; border: 0 solid #979593; width: 12px; height: 12px; z-index: 1; }
.tl { left: -1px; top: -1px; border-width: 4px 0 0 4px; } .tr { right: 0; top: -1px; border-width: 4px 4px 0 0; }
.bl { left: -1px; bottom: -3px; border-width: 0 0 4px 4px; } .br { right: 0; bottom: -3px; border-width: 0 4px 4px 0; }
.tc, .bc { left: 320px; width: 15px; border-top-width: 4px; height: 4px; } .tc { top: -1px; } .bc { bottom: -3px; }
.ml, .mr { top: 176px; height: 15px; width: 4px; border-left-width: 4px; } .ml { left: -1px; } .mr { right: 0; }
.vtools { position: absolute; right: 6px; top: 11px; display: flex; gap: 16px; }
.vtools svg { stroke: #8a8886; stroke-width: 1.500; }
.vtools .dots { fill: #777; stroke: none; }
.filters { width: 41px; display: flex; flex-direction: column; align-items: center; padding-top: 14px; }
.filters svg { stroke-width: 1.500; }
.filters .back { transform: scaleX(-1); stroke-width: 1.300; margin-bottom: 20px; }
.filters svg + svg { margin-left: 5px; }
.filters span { writing-mode: vertical-rl; font-weight: 600; font-size: 18px; line-height: 20px; margin-top: 10px; letter-spacing: -.05px; }

.pages { height: 44px; display: flex; align-items: flex-start; padding-left: 7px; }
.pages > svg { fill: #c8c8cc; stroke: none; margin: 15px 22px 0 0; }
.pages > svg + svg { margin-right: 8px; }
.page { width: 96px; height: 44px; background: #fff; border-left: 1px solid #a19f9d; border-bottom: 5px solid #f2c811; text-align: center; line-height: 43px; font-size: 14px; letter-spacing: -.5px; font-weight: 600; }
.add { width: 49px; height: 40px; margin-top: 2px; background: #f2c811; display: flex; align-items: center; justify-content: center; }
.add svg { fill: #777; stroke: none; }

/* side panes */
.viz, .fields { position: relative; width: 226px; border-left: 1px solid #e1dfdd; display: flex; flex-direction: column; }
.phead { display: flex; justify-content: space-between; align-items: center; padding: 0 10px; height: 49px; }
.phead h2 { font-size: 19px; line-height: 24px; letter-spacing: -.3px; }
.phead svg { stroke-width: 1.500; }
.sub { padding-left: 10px; line-height: 20px; margin-top: -1px; font-weight: 600; font-size: 14.200px; letter-spacing: -.35px; }
.modes { display: flex; justify-content: space-between; align-items: center; padding: 0 15px; height: 40px; margin-top: 4px; }
.modes svg { stroke: #252423; stroke-width: 1.800; }
.mode-on { width: 40px; height: 40px; background: #d2d0ce; border-radius: 2px; display: flex; align-items: center; justify-content: center; margin-right: 1px; }
.notch { margin-top: 5px; margin-left: -1px; stroke: #8a8886; stroke-width: 1.500; }
.search { height: 33px; flex: none; margin: 9px 10px 0; border: 1px solid #605e5c; border-radius: 2px; background: #fff; display: flex; align-items: center; gap: 7px; padding-left: 9px; font-size: 16.500px; color: #605e5c; letter-spacing: -.1px; }
.search svg { stroke-width: 1.400; }
.vtabs { display: flex; align-items: center; padding-left: 15px; height: 51px; font-size: 17px; letter-spacing: -.25px; }
.vtabs b { font-weight: 600; line-height: 31px; height: 34px; margin-top: 17px; width: 47px; border-bottom: 3px solid #f2c811; letter-spacing: -.5px; }
.vtabs span { margin: 14px 0 0 20px; width: 104px; }
.vtabs svg { fill: #333; stroke: none; margin-top: 13px; }
.cards { margin-top: 17px; height: 550px; overflow: hidden; padding: 0 10px; }
.card { background: #fff; border-radius: 5px; box-shadow: 0 1px 4px rgba(0,0,0,.2); padding: 16px 10px 10px; margin-bottom: 10px; }
.card.first { display: flow-root; border-radius: 0 0 5px 5px; padding-top: 0; height: 150px; }
.cut { height: 21px; padding-left: 22px; line-height: 20px; margin-top: -13px; margin-bottom: 13px; font-weight: 600; letter-spacing: -.3px; }
label { display: block; line-height: 20px; height: 20px; letter-spacing: 0; }
.pick { width: 65px; height: 30px; margin-top: 4px; border: 1px solid #c8c6c4; border-radius: 2px; display: flex; align-items: center; justify-content: space-between; padding: 0 5px; }
.pick i { width: 20px; height: 20px; border: 1px solid #8a8886; }
.pick svg { width: 15px; stroke-width: 1.300; }
.cf { background: #a6337b; } .cm { background: #0f1a78; } .cg { background: #c8c6c4; } .cd { background: #605e5c; }
.next { margin-top: 11px; }
.gap { margin-top: 15px; }
.card h4 { display: flex; align-items: center; gap: 5px; line-height: 20px; font-weight: 600; font-size: 14px; letter-spacing: -.3px; }
.card h4 svg { width: 15px; stroke-width: 2; }
.line { display: flex; justify-content: space-between; margin-top: 15px; }
.toggle { width: 40px; height: 20px; border-radius: 10px; background: #605e5c; color: #fff; font-size: 11px; line-height: 20px; padding: 0 6px; display: flex; justify-content: space-between; align-items: center; }
.toggle i { width: 10px; height: 10px; border-radius: 50%; background: #fff; }
.num { width: 87px; height: 30px; margin-top: 4px; border: 1px solid #605e5c; border-radius: 2px; display: flex; justify-content: space-between; align-items: center; padding: 0 6px 2px; }
.num svg { stroke: #8a8886; }
.reset { display: flex; align-items: center; gap: 8px; padding: 6px 0 0 2px; margin-top: 10px; line-height: 20px; }
.reset svg { stroke: #3a78ad; stroke-width: 1.400; }
.viz .thumb { position: absolute; right: 0; top: 575px; width: 8px; height: 215px; border-radius: 4px; background: #d2d0ce; }
.fields .search { margin: 8px 5px 0; }
.fields ul { list-style: none; margin-top: 10px; height: 682px; overflow: hidden; padding-left: 48px; font-weight: 400; }
.fields li { height: 30px; display: flex; align-items: center; white-space: nowrap; font-size: 14px; color: #3b3a39; }
.fields li:first-child { margin-top: -12px; }
.fields li > i { width: 15px; height: 15px; border: 1px solid #8a8886; border-radius: 2px; background: #fff; flex: none; }
.fields li > svg { width: 14px; height: 19px; margin: 0 8px 0 10px; stroke-width: 1.600; }
.fields li > .ck { background: #f2c811; border: 0; }
.ck svg { width: 15px; height: 15px; }
.fields .thumb { position: absolute; right: 5px; top: 211px; width: 10px; height: 569px; background: #c8c8c8; }

/* status bar */
.status { height: 28px; flex: none; display: flex; align-items: center; padding-left: 6px; color: #484644; letter-spacing: -.2px; font-size: 15px; }
.zoom { margin-left: auto; stroke: #605e5c; }
.pct { width: 77px; padding-left: 19px; color: #605e5c; }
.fit { margin: 2px 21px 0 3px; stroke: #444; stroke-width: 1.600; }

/* taskbar */
.taskbar { height: 61px; background: #202022; display: flex; justify-content: space-between; color: #fff; }
.taskbar svg { stroke: none; }
.apps { display: flex; padding-left: 14px; }
.apps div { width: 55px; height: 62px; display: flex; align-items: center; justify-content: center; position: relative; }
.apps .active::before { content: ""; position: absolute; inset: 6px 2px 5px 3px; border-radius: 5px; background: #2f2f33; border: 1px solid #3a3a3d; }
.active svg { position: relative; }
.apps u { position: absolute; bottom: 6px; width: 20px; height: 4px; border-radius: 2px; background: #f47f67; left: 18px; }
.apps u.gray { width: 8px; left: 24px; background: #999; }
.tray { display: flex; align-items: center; padding-right: 25px; }
.tray svg { stroke: #fff; stroke-width: 1.500; margin-right: 9px; }
.tray svg:first-child { margin-right: 16px; }
.clock { width: 92px; margin-left: -8px; text-align: right; font-size: 14.700px; line-height: 21px; letter-spacing: 0; padding-bottom: 1px; }
.badge { width: 20px; height: 20px; margin-left: 10px; border-radius: 50%; background: #f47f67; color: #222; font-size: 13px; line-height: 20px; text-align: center; }
```
